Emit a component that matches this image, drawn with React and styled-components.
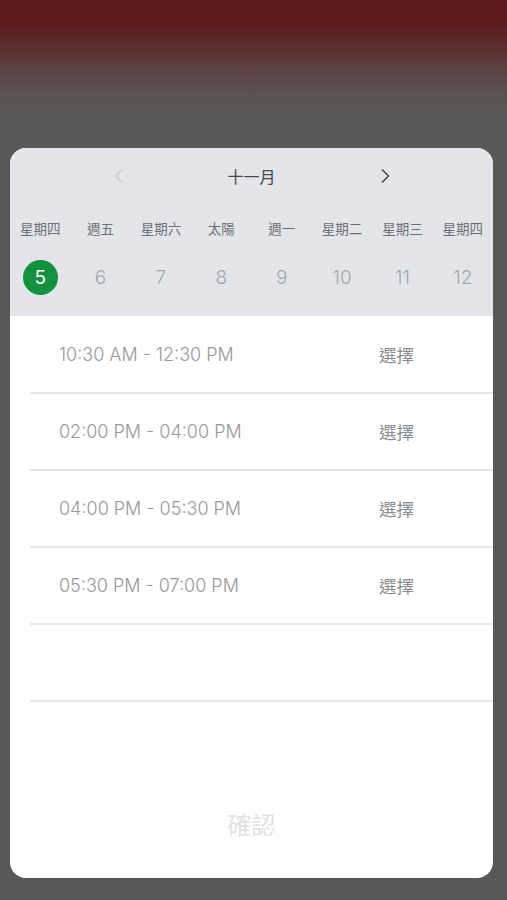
import React, { useState } from 'react';
import styled, { createGlobalStyle } from 'styled-components';

const GlobalStyle = createGlobalStyle`
  html, body {
    margin: 0;
    padding: 0;
  }
  body {
    min-height: 900px;
    background: linear-gradient(
      180deg,
      #5b1a1b 0px,
      #5c1c1c 24px,
      #5d3133 50px,
      #5d4446 72px,
      #5a5553 97px,
      #575958 125px,
      #585858 160px,
      #585858 100%
    );
    font-family: Inter, "Noto Sans CJK TC", sans-serif;
  }
`;

const Page = styled.div`
  padding: 148px 14px 22px 10px;
`;

const Sheet = styled.div`
  height: 730px;
  background: #fff;
  border-radius: 16px;
  overflow: hidden;
  display: flex;
  flex-direction: column;
`;

const Header = styled.div`
  background: #e3e5ea;
  padding-bottom: 14px;
`;

const MonthRow = styled.div`
  height: 56px;
  display: flex;
  align-items: center;
  justify-content: center;
  gap: 104px;
`;

const MonthTitle = styled.div`
  font-family: "Noto Sans CJK TC", sans-serif;
  font-size: 16px;
  color: #45474b;
  width: 48px;
  text-align: center;
`;

const Arrow = styled.button`
  width: 11px;
  height: 16px;
  padding: 0;
  border: none;
  background: none;
  display: flex;
  align-items: center;
  justify-content: center;
  color: ${(p) => (p.$disabled ? '#c9ccd1' : '#3e4044')};
  cursor: pointer;
`;

const DayGrid = styled.div`
  display: grid;
  grid-template-columns: repeat(8, 1fr);
  height: ${(p) => p.$h}px;
  align-items: center;
  justify-items: center;
`;

const WeekLabel = styled.div`
  font-family: "Noto Sans CJK TC", sans-serif;
  font-size: 13.5px;
  color: #6e7075;
  white-space: nowrap;
`;

const DateCell = styled.div`
  width: 35px;
  height: 35px;
  border-radius: 50%;
  display: flex;
  align-items: center;
  justify-content: center;
  font-size: 19px;
  color: ${(p) => (p.$active ? '#fff' : '#a3a7ae')};
  background: ${(p) => (p.$active ? '#14913f' : 'transparent')};
  font-weight: ${(p) => (p.$active ? 400 : 300)};
  cursor: pointer;
`;

const SlotList = styled.div`
  margin-top: 1px;
  margin-left: 20px;
`;

const SlotRow = styled.div`
  height: 75px;
  border-bottom: 2px solid #e6e6e6;
  display: grid;
  grid-template-columns: 320px auto;
  align-items: center;
  padding-left: 29px;
`;

const SlotTime = styled.div`
  font-size: 18px;
  font-weight: 300;
  color: #97989a;
`;

const SelectText = styled.div`
  font-family: "Noto Sans CJK TC", sans-serif;
  font-size: 17.5px;
  color: #8b8c8e;
  cursor: pointer;
`;

const Footer = styled.div`
  flex: 1;
  display: flex;
  align-items: flex-end;
  justify-content: center;
  padding-bottom: 33px;
`;

const ConfirmButton = styled.button`
  height: 44px;
  border: none;
  background: none;
  font-family: "Noto Sans CJK TC", sans-serif;
  font-size: 24px;
  color: #e1e1e1;
  padding: 0 10px;
`;

const weekdays = ['星期四', '週五', '星期六', '太陽', '週一', '星期二', '星期三', '星期四'];
const dates = [5, 6, 7, 8, 9, 10, 11, 12];
const slots = [
  '10:30 AM - 12:30 PM',
  '02:00 PM - 04:00 PM',
  '04:00 PM - 05:30 PM',
  '05:30 PM - 07:00 PM',
];

function Chevron({ dir }) {
  return (
    <svg width="11" height="16" viewBox="0 0 11 16" fill="none">
      {dir === 'left' ? (
        <polyline points="9,1.5 2.5,8 9,14.5" stroke="currentColor" strokeWidth="1.4" />
      ) : (
        <polyline points="2,1.5 8.5,8 2,14.5" stroke="currentColor" strokeWidth="1.4" />
      )}
    </svg>
  );
}

export default function App() {
  const [selected, setSelected] = useState(5);

  return (
    <>
      <GlobalStyle />
      <Page>
        <Sheet>
          <Header>
            <MonthRow>
              <Arrow $disabled><Chevron dir="left" /></Arrow>
              <MonthTitle>十一月</MonthTitle>
              <Arrow><Chevron dir="right" /></Arrow>
            </MonthRow>
            <DayGrid $h={48}>
              {weekdays.map((w, i) => (
                <WeekLabel key={i}>{w}</WeekLabel>
              ))}
            </DayGrid>
            <DayGrid $h={50}>
              {dates.map((d) => (
                <DateCell key={d} $active={d === selected} onClick={() => setSelected(d)}>
                  {d}
                </DateCell>
              ))}
            </DayGrid>
          </Header>
          <SlotList>
            {slots.map((s) => (
              <SlotRow key={s}>
                <SlotTime>{s}</SlotTime>
                <SelectText>選擇</SelectText>
              </SlotRow>
            ))}
            <SlotRow />
          </SlotList>
          <Footer>
            <ConfirmButton>確認</ConfirmButton>
          </Footer>
        </Sheet>
      </Page>
    </>
  );
}
